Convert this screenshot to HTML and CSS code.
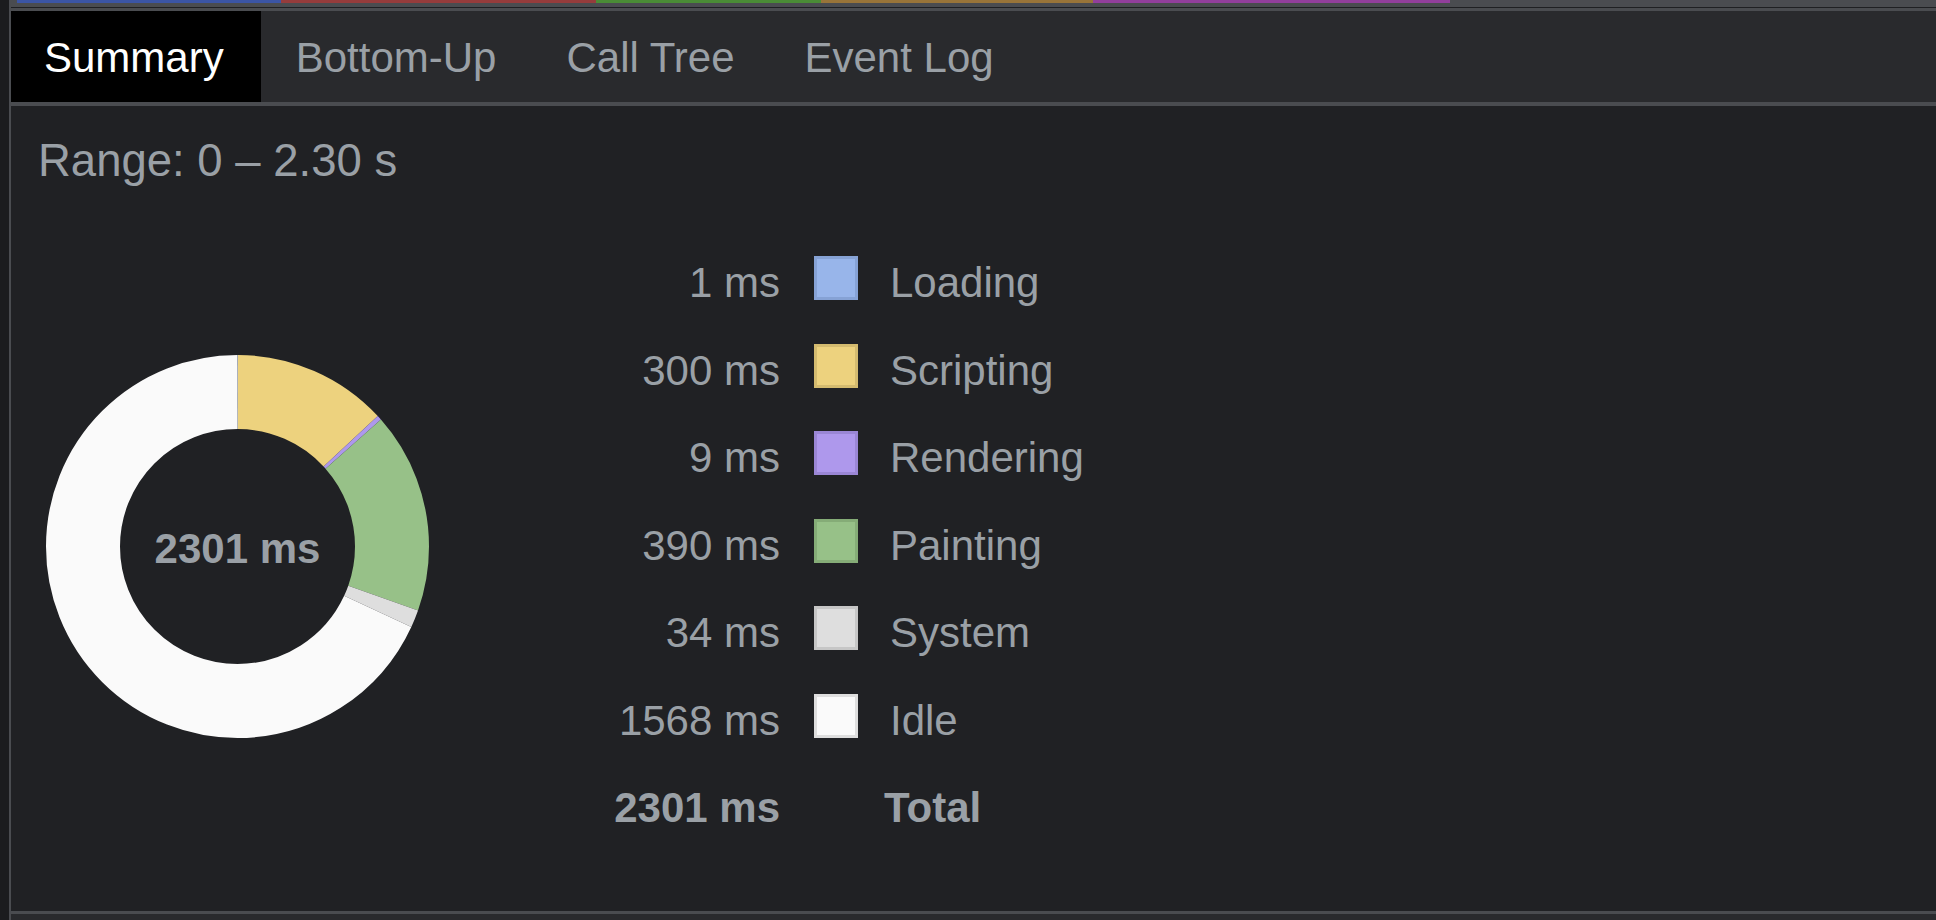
FILE: index.html
```html
<!DOCTYPE html>
<html>
<head>
<meta charset="utf-8">
<title>Summary</title>
<link rel="stylesheet" href="styles.css">
</head>
<body>
<div class="gutter"></div>
<div class="gutter-line"></div>
<div class="panel">
  <div class="overview">
    <div class="overview-bar">
      <div class="ov ov-blue"></div>
      <div class="ov ov-red"></div>
      <div class="ov ov-green"></div>
      <div class="ov ov-orange"></div>
      <div class="ov ov-purple"></div>
    </div>
    <div class="overview-gap"></div>
    <div class="overview-rule"></div>
  </div>
  <div class="tabs">
    <div class="tab active">Summary</div>
    <div class="tab">Bottom-Up</div>
    <div class="tab">Call Tree</div>
    <div class="tab">Event Log</div>
  </div>
  <div class="content">
    <div class="range">Range: 0 – 2.30 s</div>
    <div class="summary">
      <svg class="pie" width="385" height="385" viewBox="0 0 385 385">
        <g transform="rotate(-90 192.5 192.5)">
          <circle class="slice" cx="192.5" cy="192.5" r="154.5" stroke="#98b5ea" stroke-dasharray="0.42 970.33" stroke-dashoffset="0"/>
          <circle class="slice" cx="192.5" cy="192.5" r="154.5" stroke="#edd27e" stroke-dasharray="126.51 844.24" stroke-dashoffset="-0.42"/>
          <circle class="slice" cx="192.5" cy="192.5" r="154.5" stroke="#ae98ec" stroke-dasharray="3.80 966.95" stroke-dashoffset="-126.93"/>
          <circle class="slice" cx="192.5" cy="192.5" r="154.5" stroke="#97c188" stroke-dasharray="164.47 806.28" stroke-dashoffset="-130.73"/>
          <circle class="slice" cx="192.5" cy="192.5" r="154.5" stroke="#dedede" stroke-dasharray="14.34 956.41" stroke-dashoffset="-295.20"/>
          <circle class="slice" cx="192.5" cy="192.5" r="154.5" stroke="#fafafa" stroke-dasharray="661.22 309.53" stroke-dashoffset="-309.54"/>
        </g>
        <text class="pie-total" x="192.5" y="208.5" text-anchor="middle">2301 ms</text>
      </svg>
      <div class="legend">
        <div class="value">1 ms</div><div class="swatch sw-loading"></div><div class="label">Loading</div>
        <div class="value">300 ms</div><div class="swatch sw-scripting"></div><div class="label">Scripting</div>
        <div class="value">9 ms</div><div class="swatch sw-rendering"></div><div class="label">Rendering</div>
        <div class="value">390 ms</div><div class="swatch sw-painting"></div><div class="label">Painting</div>
        <div class="value">34 ms</div><div class="swatch sw-system"></div><div class="label">System</div>
        <div class="value">1568 ms</div><div class="swatch sw-idle"></div><div class="label">Idle</div>
        <div class="value total">2301 ms</div><div class="swatch-empty"></div><div class="label total total-label">Total</div>
      </div>
    </div>
  </div>
  <div class="bottom"></div>
</div>
</body>
</html>
```

FILE: styles.css
```css
html, body {
  margin: 0;
  height: 920px;
  overflow: hidden;
}
body {
  display: flex;
  background: #202124;
  font-family: "Liberation Sans", Arial, sans-serif;
  color: #9aa0a6;
}
.gutter {
  width: 9px;
  flex: none;
  background: #1b1c1e;
}
.gutter-line {
  width: 2px;
  flex: none;
  background: #4a4c50;
}
.panel {
  flex: 1;
  min-width: 0;
  display: flex;
  flex-direction: column;
}
.overview {
  flex: none;
  height: 11px;
  background: #4a4c50;
  display: flex;
  flex-direction: column;
}
.overview-bar {
  height: 3px;
  display: flex;
  padding-left: 6px;
}
.ov { height: 3px; }
.ov-blue { width: 264px; background: #3b55a5; }
.ov-red { width: 315px; background: #953c3c; }
.ov-green { width: 225px; background: #4a8c36; }
.ov-orange { width: 272px; background: #987439; }
.ov-purple { width: 357px; background: #923f9c; }
.overview-gap { height: 4px; }
.overview-rule { height: 1px; background: #1f2023; }
.tabs {
  flex: none;
  height: 91px;
  display: flex;
  background: #292a2d;
  border-bottom: 4px solid #4a4c50;
}
.tab {
  padding: 2px 35px 0;
  font-size: 42px;
  line-height: 89px;
  color: #9aa0a6;
  white-space: nowrap;
}
.tab.active {
  padding-left: 33px;
  padding-right: 37px;
  background: #000;
  color: #fff;
}
.content {
  flex: 1;
  padding: 29px 0 0 24px;
  border-bottom: 3px solid #4a4c50;
}
.range {
  padding-left: 3px;
  font-size: 45.5px;
  line-height: 52px;
  color: #9aa0a6;
}
.summary {
  display: flex;
  align-items: flex-start;
  margin-top: 47.5px;
}
.pie {
  flex: none;
  margin-left: 10px;
  margin-top: 119px;
}
.slice {
  fill: none;
  stroke-width: 74;
}
.pie-total {
  font-family: "Liberation Sans", Arial, sans-serif;
  font-weight: bold;
  font-size: 42px;
  fill: #9aa0a6;
}
.legend {
  display: grid;
  grid-template-columns: 201px 44px auto;
  grid-auto-rows: 87.5px;
  column-gap: 34px;
  margin-left: 149px;
  align-items: start;
}
.value {
  text-align: right;
  font-size: 42px;
  line-height: 48px;
  margin-top: 24.6px;
  white-space: nowrap;
}
.label {
  font-size: 42px;
  line-height: 48px;
  margin-top: 24.6px;
  margin-left: -2px;
  white-space: nowrap;
}
.total {
  font-weight: bold;
}
.total-label {
  margin-left: -8px;
}
.swatch {
  width: 44px;
  height: 44px;
  box-sizing: border-box;
  border: 3px solid;
  margin-top: 21.5px;
}
.sw-loading { background: #98b5ea; border-color: #86a2d5; }
.sw-scripting { background: #edd27e; border-color: #d4bb6f; }
.sw-rendering { background: #ae98ec; border-color: #9a86d5; }
.sw-painting { background: #97c188; border-color: #85ac77; }
.sw-system { background: #dedede; border-color: #c6c6c6; }
.sw-idle { background: #fafafa; border-color: #dedede; }
.bottom {
  flex: none;
  height: 6px;
  background: #292a2d;
}
```
